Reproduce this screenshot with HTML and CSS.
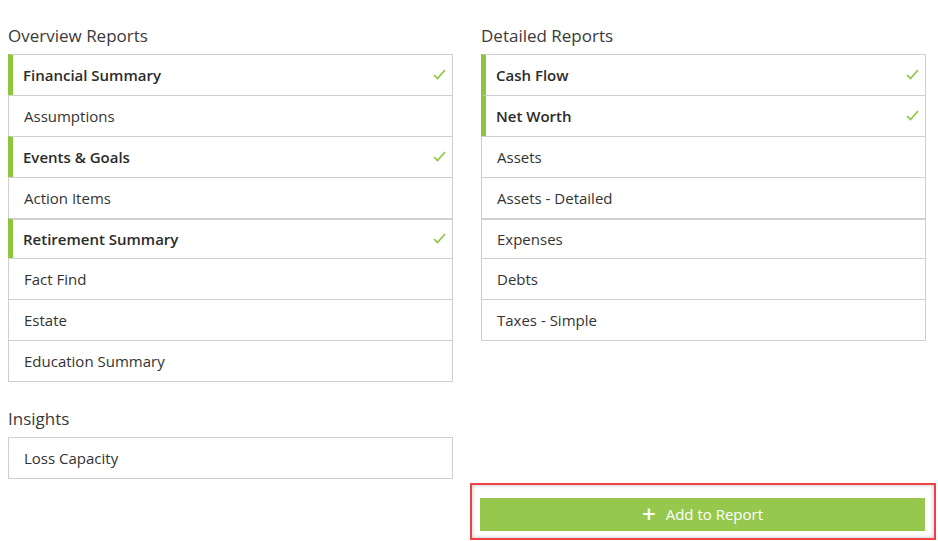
FILE: index.html
```html
<!DOCTYPE html>
<html>
<head>
<meta charset="utf-8">
<link rel="stylesheet" href="styles.css">
</head>
<body>
<div class="page">
  <div class="cols">
    <div class="col">
      <h2 class="title">Overview Reports</h2>
      <ul class="list">
        <li class="item sel">Financial Summary<svg class="check" viewBox="0 0 13 11"><polyline points="1,6 4.5,9.5 12,1"/></svg></li>
        <li class="item">Assumptions</li>
        <li class="item sel">Events &amp; Goals<svg class="check" viewBox="0 0 13 11"><polyline points="1,6 4.5,9.5 12,1"/></svg></li>
        <li class="item">Action Items</li>
        <li class="item sel split">Retirement Summary<svg class="check" viewBox="0 0 13 11"><polyline points="1,6 4.5,9.5 12,1"/></svg></li>
        <li class="item">Fact Find</li>
        <li class="item">Estate</li>
        <li class="item">Education Summary</li>
      </ul>
      <h2 class="title gap">Insights</h2>
      <ul class="list">
        <li class="item">Loss Capacity</li>
      </ul>
    </div>
    <div class="col">
      <h2 class="title">Detailed Reports</h2>
      <ul class="list">
        <li class="item sel">Cash Flow<svg class="check" viewBox="0 0 13 11"><polyline points="1,6 4.5,9.5 12,1"/></svg></li>
        <li class="item sel">Net Worth<svg class="check" viewBox="0 0 13 11"><polyline points="1,6 4.5,9.5 12,1"/></svg></li>
        <li class="item">Assets</li>
        <li class="item">Assets - Detailed</li>
        <li class="item split">Expenses</li>
        <li class="item">Debts</li>
        <li class="item">Taxes - Simple</li>
      </ul>
    </div>
  </div>
  <div class="footer">
    <div class="highlight">
      <button class="add"><span class="plus">+</span>Add to Report</button>
    </div>
  </div>
</div>
</body>
</html>
```
FILE: styles.css
```css
html, body {
  margin: 0;
  padding: 0;
  background: #fff;
}
body {
  font-family: "Open Sans", "Liberation Sans", sans-serif;
  color: #333;
}
.page {
  padding: 24px 12px 0 8px;
}
.cols {
  display: grid;
  grid-template-columns: 445px 445px;
  column-gap: 28px;
}
.title {
  margin: 0 0 6px 0;
  font-size: 17px;
  font-weight: 400;
  line-height: 24px;
  color: #3a3a3a;
}
.title.gap {
  margin-top: 25px;
}
.list {
  list-style: none;
  margin: 0;
  padding: 0;
  border-right: 1px solid #cfcfcf;
  border-bottom: 1px solid #cfcfcf;
}
.item {
  display: flex;
  align-items: center;
  justify-content: space-between;
  height: 39px;
  border-top: 1px solid #cfcfcf;
  border-left: 1px solid #cfcfcf;
  padding: 0 6px 1px 15px;
  font-size: 15px;
  color: #333;
}
.item.split {
  border-top: 2px solid #cfcfcf;
  height: 37px;
}
.item.sel {
  border-left: 5px solid #8cc63f;
  padding-left: 10px;
  font-weight: 600;
  color: #2b2b2b;
}
.check {
  width: 13px;
  height: 11px;
  fill: none;
  stroke: #8cc63f;
  stroke-width: 1.6;
}
.footer {
  display: flex;
  justify-content: flex-end;
  margin-top: 4px;
  margin-right: -10px;
}
.highlight {
  width: 445px;
  border: 2px solid #ee4146;
  padding: 13px 9px 7px 8px;
  box-shadow: inset 0 0 4px rgba(0,0,0,0.25);
}
.add {
  display: flex;
  align-items: center;
  justify-content: center;
  width: 100%;
  height: 33px;
  border: none;
  background: #97c84e;
  color: #fff;
  font-family: "Open Sans", "Liberation Sans", sans-serif;
  font-size: 15px;
  padding: 0 0 2px 0;
}
.plus {
  font-size: 24px;
  font-weight: 600;
  line-height: 1;
  margin-right: 10px;
  margin-top: 0;
}
```
